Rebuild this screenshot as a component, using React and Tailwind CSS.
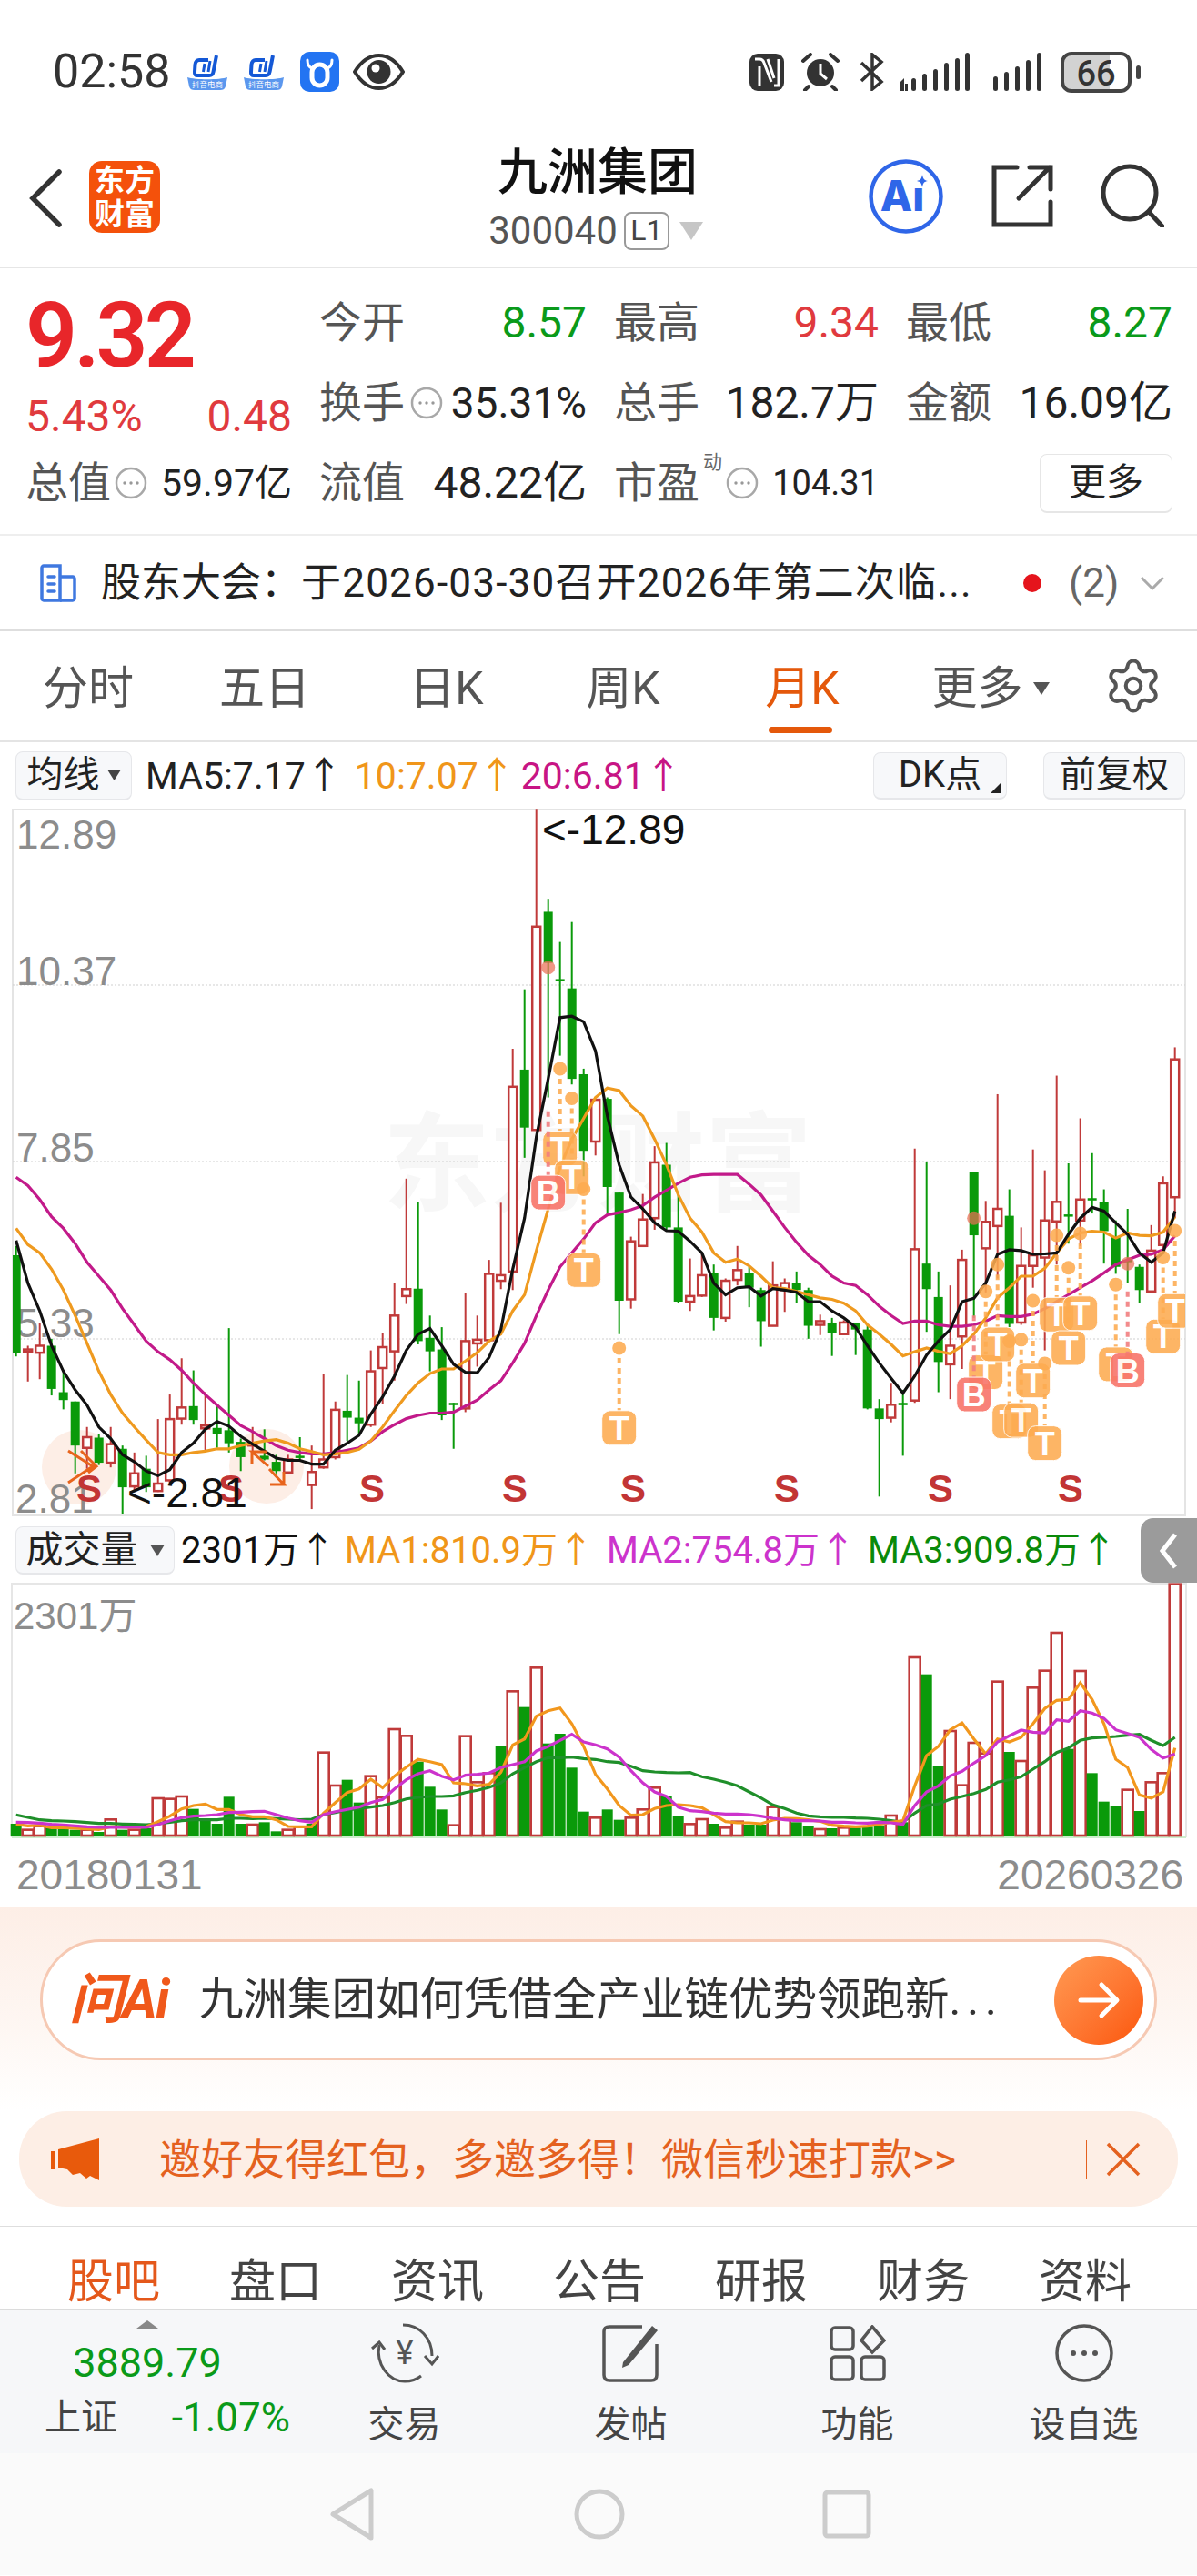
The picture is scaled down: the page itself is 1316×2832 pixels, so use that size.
import { Settings } from 'lucide-react';

const kx = (i) => 17.7 + 13 * i;
const ky = (z) => 880 + z / 1.96;
const pts = (ys) => ys.map((y, i) => `${kx(i).toFixed(1)},${y.toFixed(1)}`).join(' ');

// hi, body top, body bottom, lo, colour (read off the chart)
const K = [
  [960,980,1190,1198,'g'],[1175,1183,1188,1252,'r'],[1125,1175,1190,1247,'r'],[1160,1175,1268,1282,'g'],[1230,1275,1292,1312,'g'],
  [1295,1295,1390,1450,'g'],[1350,1372,1395,1440,'r'],[1365,1373,1427,1432,'g'],[1350,1387,1427,1437,'r'],[1390,1397,1480,1540,'g'],
  [1405,1450,1478,1490,'r'],[1412,1440,1480,1490,'g'],[1333,1472,1488,1490,'r'],[1280,1333,1465,1470,'r'],[1202,1308,1332,1345,'r'],
  [1228,1305,1335,1345,'g'],[1275,1347,1353,1400,'r'],[1302,1352,1365,1395,'g'],[1137,1357,1385,1405,'g'],[1375,1382,1415,1445,'g'],
  [1350,1385,1390,1410,'r'],[1355,1412,1420,1422,'g'],[1410,1425,1445,1450,'g'],[1410,1420,1448,1450,'r'],[1372,1412,1415,1420,'g'],
  [1390,1447,1475,1527,'r'],[1235,1420,1437,1440,'r'],[1295,1313,1415,1420,'r'],[1238,1315,1330,1380,'g'],[1250,1330,1342,1365,'g'],
  [1185,1230,1345,1350,'r'],[1148,1178,1223,1300,'r'],[1040,1110,1187,1250,'r'],[815,1053,1068,1085,'r'],[865,1052,1165,1172,'g'],
  [1110,1158,1187,1230,'g'],[1135,1183,1325,1335,'g'],[1298,1298,1300,1397,'g'],[1062,1165,1310,1318,'r'],[1110,1162,1170,1220,'r'],
  [990,1020,1163,1165,'r'],[867,1023,1035,1053,'r'],[535,617,1015,1055,'r'],[407,580,705,770,'g'],[18,272,710,712,'r'],
  [212,240,350,640,'g'],[305,385,389,550,'g'],[262,405,600,612,'g'],[578,590,755,810,'g'],[645,645,735,765,'r'],
  [640,643,833,895,'g'],[843,845,1078,1150,'g'],[940,950,1075,1095,'r'],[848,903,960,962,'r'],[745,780,900,925,'r'],
  [738,785,920,925,'g'],[850,920,1080,1082,'g'],[987,1068,1080,1100,'r'],[975,1023,1067,1070,'r'],[1000,1018,1115,1142,'g'],
  [1030,1035,1115,1123,'r'],[960,1012,1033,1045,'r'],[1005,1018,1050,1092,'g'],[1050,1055,1122,1177,'g'],[993,1045,1132,1133,'r'],
  [1030,1040,1055,1102,'r'],[1015,1040,1055,1082,'g'],[1050,1055,1132,1160,'g'],[1108,1122,1130,1152,'r'],[1115,1125,1148,1197,'g'],
  [1120,1125,1150,1152,'r'],[1125,1125,1140,1195,'g'],[1130,1140,1310,1312,'g'],[1290,1310,1333,1500,'g'],[1255,1302,1330,1340,'r'],
  [1270,1298,1303,1412,'g'],[750,967,1293,1298,'r'],[778,998,1053,1145,'g'],[1015,1070,1210,1275,'g'],[1045,1175,1215,1290,'r'],
  [968,990,1155,1225,'r'],[800,800,937,1115,'g'],[863,908,965,1060,'r'],[633,880,917,1030,'r'],[838,895,1128,1135,'g'],
  [920,1003,1125,1130,'r'],[752,980,1003,1050,'r'],[797,905,985,1185,'r'],[593,865,907,1000,'r'],[782,892,896,955,'g'],
  [685,860,905,960,'r'],[760,857,862,890,'g'],[838,865,928,998,'g'],[905,940,1005,1020,'g'],[880,990,995,1040,'g'],
  [1000,1005,1055,1083,'g'],[915,970,1058,1060,'r'],[810,825,958,965,'r'],[532,558,855,900,'r'],
];

const MA5 = [948,1040,1100,1175,1230,1270,1303,1350,1375,1410,1425,1445,1455,1442,1405,1385,1355,1338,1348,1370,1387,1402,1417,1422,1422,1430,1430,1400,1385,1368,1322,1285,1240,1185,1150,1138,1175,1215,1232,1233,1200,1140,1010,900,725,600,468,465,477,540,680,785,855,880,910,927,928,950,975,1040,1065,1050,1048,1068,1052,1055,1060,1080,1080,1100,1115,1135,1175,1212,1245,1277,1240,1195,1165,1140,1080,1073,1040,978,968,970,978,977,975,935,900,877,885,910,935,975,995,975,885].map(ky);
const MA10 = [922,957,975,1010,1055,1110,1170,1230,1280,1320,1350,1378,1405,1410,1410,1405,1402,1397,1397,1390,1385,1380,1377,1385,1397,1403,1410,1408,1405,1398,1380,1350,1315,1282,1255,1235,1225,1225,1208,1190,1165,1150,1100,1065,970,880,790,730,685,640,620,625,658,680,730,785,850,900,930,975,995,988,1003,1025,1050,1052,1058,1065,1072,1075,1083,1100,1130,1150,1172,1197,1188,1180,1187,1192,1175,1150,1115,1072,1050,1025,1025,1008,975,945,932,928,930,943,932,937,938,930,897].map(ky);
const MA20 = [812,830,860,897,922,955,995,1025,1055,1095,1130,1165,1188,1205,1228,1255,1280,1303,1325,1347,1360,1375,1390,1400,1405,1408,1408,1405,1400,1395,1380,1360,1345,1332,1325,1320,1320,1318,1305,1292,1270,1250,1212,1170,1110,1055,1005,975,945,910,893,888,882,873,855,840,825,812,807,806,806,806,827,850,885,920,952,980,1000,1025,1040,1045,1065,1090,1110,1127,1122,1122,1130,1133,1133,1130,1122,1110,1112,1112,1107,1095,1080,1065,1050,1035,1018,1000,990,980,978,968,938].map(ky);

// [candle index, dot, tag] in chart read-off units
const TAGS = [[46,578,750],[47,642,812],[48,838,1012],[51,1180,1352],[82,1058,1232],[83,1000,1172],[84,1165,1338],[85,1162,1335],[86,1078,1250],[87,1213,1385],[88,937,1108],[89,1007,1180],[90,933,1105],[93,1043,1215],[97,985,1155],[98,927,1100]];
const BTAGS = [[45,360,670,845],[81,900,1110,1280],[94,998,1058,1228]];

const SLABELS = [98, 254, 409, 566, 696, 865, 1034, 1177];

const volColors = 'grrgggrgrgrgrrrgggggrggrrgrrggrrrrgggrr' + 'rrgrgrggggrggrrrggrrgrrggrrggrg' + 'rgggrgrggrrrrrgrrrrgrgggrgrrr';
const V1 = [735,752,740,750,750,755,752,762,718,755,752,750,648,650,642,686,720,735,646,735,735,730,760,752,742,735,497,606,590,665,575,645,420,442,530,613,688,737,443].map((z) => 1760 + z / 3);
const V2 = [655,625,538,355,410,277,530,498,610,755,772,748,782,772,745,673,703,768,793,777,795,805,785,798,798,737,775,790,803,810,810].map((z) => 1740 + z / 3);
const V3 = [805,808,805,800,765,790,243,302,606,486,665,525,560,323,558,585,343,287,162,548,288,628,722,737,680,753,655,625,2].map((z) => 1740 + z / 3);
const VOL = [...V1, ...V2, ...V3];

const vline = (a, b, c) => [...a.map((z) => 1760 + z / 3), ...b.map((z) => 1740 + z / 3), ...c.map((z) => 1740 + z / 3)];
const VMA1 = vline(
  [737,742,740,748,748,750,752,754,745,746,748,745,728,710,686,675,670,688,688,705,712,712,722,744,745,745,700,665,632,620,588,616,578,548,523,530,540,600,603],
  [670,665,625,535,515,440,422,413,465,540,632,680,735,767,765,745,735,732,735,742,765,788,792,792,795,783,777,778,782,787,800],
  [803,805,803,797,790,785,670,570,540,485,462,515,565,515,525,510,465,415,388,385,330,385,465,582,610,700,710,690,545],
);
const VMA2 = vline(
  [730,731,733,737,739,742,745,747,747,747,747,747,738,725,715,710,708,705,698,697,695,694,705,716,725,730,705,695,688,680,665,655,620,590,570,560,578,590,575],
  [632,628,610,600,590,555,540,520,500,525,535,548,575,620,660,690,705,740,752,755,760,763,763,765,770,777,782,785,785,786,790],
  [790,792,793,790,792,797,735,690,670,637,622,595,570,525,505,486,493,495,452,457,422,430,447,485,497,510,550,578,565],
);
const VMA3 = vline(
  [706,714,722,725,726,728,731,734,734,736,737,738,735,730,725,722,722,722,717,717,718,717,718,720,722,720,705,698,690,685,680,675,665,653,648,645,645,643,632],
  [685,675,660,630,610,590,577,577,575,580,583,590,593,605,620,624,626,627,626,640,648,658,670,690,710,733,745,760,769,772,774],
  [774,776,777,780,785,790,760,735,730,714,705,695,682,658,650,640,615,590,560,545,520,512,510,507,503,500,520,537,510],
);

const RED = '#c03a3a';
const GREEN = '#0a9a0a';

const axisFont = "font-['Liberation_Sans','Noto_Sans_CJK_SC',sans-serif]";

function InfoDots({ className }) {
  return (
    <svg className={className} viewBox="0 0 36 36" fill="none">
      <circle cx="18" cy="18" r="16" stroke="#a8a8a8" strokeWidth="2.5" />
      <circle cx="11" cy="18" r="1.7" fill="#999" />
      <circle cx="18" cy="18" r="1.7" fill="#999" />
      <circle cx="25" cy="18" r="1.7" fill="#999" />
    </svg>
  );
}

function SmallBtn({ className, children }) {
  return (
    <div className={`shrink-0 flex items-center justify-center rounded-[8px] border border-[#e6e7ea] border-b-2 bg-[#f7f8fa] ${className}`}>
      {children}
    </div>
  );
}

function StatusBar() {
  return (
    <div className="h-[140px] pt-[56px] pl-[58px] pr-[61px] flex items-start justify-between">
      <div className="flex items-center h-[46px]">
        <span className="text-[52px] leading-[46px] text-[#333] w-[148px]">02:58</span>
        {[0, 1].map((n) => (
          <svg key={n} className="w-[44px] h-[40px] mr-[18px]" viewBox="0 0 44 40" fill="none">
            <path d="M13 7h10M13 7c-3 0-4 2-4.500 5L8 20c-.4 3 1 4 3 4h13c3 0 4-1 4.500-4L32 2" stroke="#1458d6" strokeWidth="4" />
            <path d="M19 11l-1.500 9M25 8l-2 12" stroke="#1458d6" strokeWidth="3" />
            <path d="M0 26c8 3 36 3 44 0l-2 10c-1 3-3 4-6 4H8c-3 0-5-1-6-4z" fill="#5b97ee" />
            <text x="22" y="37" textAnchor="middle" fontSize="8.500" fill="#fff">抖音电商</text>
          </svg>
        ))}
        <svg className="w-[43px] h-[44px]" viewBox="0 0 43 44" fill="none">
          <rect width="43" height="44" rx="10" fill="#2374f2" />
          <path d="M8 9c0 5 2 8 5 9M35 9c0 5-2 8-5 9" stroke="#fff" strokeWidth="3" strokeLinecap="round" />
          <rect x="13" y="14" width="17" height="23" rx="8.500" stroke="#fff" strokeWidth="5" />
        </svg>
        <svg className="w-[57px] h-[40px] ml-[15px]" viewBox="0 0 57 40" fill="none">
          <path d="M2 20C10 7 19 2 28.500 2S47 7 55 20C47 33 38 38 28.500 38S10 33 2 20z" stroke="#333" strokeWidth="4" />
          <circle cx="28.500" cy="20" r="13" fill="#333" />
          <circle cx="25" cy="16" r="4.500" fill="#fff" />
        </svg>
      </div>
      <div className="flex items-center h-[46px]">
        <svg className="w-[38px] h-[41px]" viewBox="0 0 38 41" fill="none">
          <rect width="38" height="41" rx="9" fill="#333" />
          <path d="M6 6h5c3 0 4 1 5 4l8 21M11 35V14M20 6l7 21M32 6v29h-5" stroke="#fff" strokeWidth="3" />
        </svg>
        <svg className="w-[44px] h-[42px] ml-[18px]" viewBox="0 0 44 42" fill="none">
          <circle cx="22" cy="22" r="15" fill="#333" />
          <path d="M22 12v11l7 6" stroke="#fff" strokeWidth="3" />
          <path d="M3 9l8-7M41 9l-8-7M9 37l-4 4M35 37l4 4" stroke="#333" strokeWidth="4" strokeLinecap="round" />
        </svg>
        <svg className="w-[27px] h-[42px] ml-[21px]" viewBox="0 0 27 42" fill="none">
          <path d="M2 11l22 21-10 8V2l10 8L2 31" stroke="#333" strokeWidth="3.500" />
        </svg>
        <svg className="w-[76px] h-[42px] ml-[18px]" viewBox="0 0 76 42" fill="#333">
          <path d="M0 32l4-4v14H0zM5 34h3v8H5z" />
          <rect x="12" y="28" width="5" height="14" rx="2.500" />
          <rect x="24" y="23" width="5" height="19" rx="2.500" />
          <rect x="36" y="18" width="5" height="24" rx="2.500" />
          <rect x="48" y="11" width="5" height="31" rx="2.500" />
          <rect x="71" y="0" width="5" height="42" rx="2.500" />
          <rect x="60" y="6" width="5" height="36" rx="2.500" />
        </svg>
        <svg className="w-[53px] h-[42px] ml-[26px]" viewBox="0 0 53 42" fill="#333">
          <rect x="0" y="26" width="5" height="16" rx="2.500" />
          <rect x="12" y="21" width="5" height="21" rx="2.500" />
          <rect x="24" y="15" width="5" height="27" rx="2.500" />
          <rect x="36" y="8" width="5" height="34" rx="2.500" />
          <rect x="48" y="0" width="5" height="42" rx="2.500" />
        </svg>
        <svg className="w-[89px] h-[45px] ml-[21px]" viewBox="0 0 89 45" fill="none">
          <rect x="4" y="4" width="50" height="37" fill="#d2d2d2" />
          <rect x="2" y="2" width="74" height="41" rx="10" stroke="#444" strokeWidth="4" />
          <rect x="83" y="15" width="5" height="15" rx="2.500" fill="#444" />
          <text x="39" y="37" textAnchor="middle" fontSize="38" fontWeight="500" fill="#333">66</text>
        </svg>
      </div>
    </div>
  );
}

function Header() {
  return (
    <div className="h-[155px] border-b-2 border-[#e6e6e6] grid grid-cols-[1fr_auto_1fr]">
      <div className="flex items-start pl-[32px] pt-[37px]">
        <svg className="w-[36px] h-[64px] mt-[9px]" viewBox="0 0 36 64" fill="none">
          <path d="M33 3L4 32l29 29" stroke="#333" strokeWidth="5.500" strokeLinecap="round" />
        </svg>
        <div className="ml-[30px] w-[78px] h-[79px] rounded-[14px] bg-[#f4510b] text-white text-[33px] leading-[37px] font-bold flex flex-col items-center justify-center">
          <span>东方</span>
          <span>财富</span>
        </div>
      </div>
      <div className="flex flex-col items-center pt-[16px]">
        <div className="text-[55px] leading-[66px] font-medium text-[#111] -ml-[2px]">九洲集团</div>
        <div className="flex items-center mt-[11px] h-[42px] -ml-[6px]">
          <span className="text-[42px] leading-[42px] text-[#555]">300040</span>
          <span className="ml-[7px] w-[50px] h-[42px] border-2 border-[#999] rounded-[8px] text-[32px] leading-[36px] text-[#444] text-center">L1</span>
          <svg className="ml-[11px] w-[26px] h-[20px]" viewBox="0 0 26 20"><path d="M0 0h26L13 20z" fill="#c6c6c6" /></svg>
        </div>
      </div>
      <div className="flex items-start justify-end pr-[36px] pt-[34px]">
        <svg className="w-[84px] h-[84px]" viewBox="0 0 84 84" fill="none">
          <circle cx="42" cy="42" r="38.500" stroke="#2f66e8" strokeWidth="4.500" />
          <text x="38" y="58" textAnchor="middle" fontSize="46" fontWeight="800" fill="#2f66e8" fontFamily="Inter, sans-serif">Aı</text>
          <path d="M60 18c1 5 2 6 6 7-4 1-5 2-6 7-1-5-2-6-6-7 4-1 5-2 6-7z" fill="#2f66e8" />
        </svg>
        <svg className="w-[68px] h-[70px] ml-[52px] mt-[6px]" viewBox="0 0 68 70" fill="none" stroke="#333" strokeWidth="5">
          <path d="M28 4H3v63h62V42" strokeLinecap="round" />
          <path d="M30 38L64 4M42 4h23v24" strokeLinecap="round" />
        </svg>
        <svg className="w-[70px] h-[70px] ml-[52px] mt-[6px]" viewBox="0 0 70 70" fill="none" stroke="#333" strokeWidth="5">
          <circle cx="32" cy="32" r="29" />
          <path d="M54 54l14 15" strokeLinecap="round" />
        </svg>
      </div>
    </div>
  );
}

const labelCls = 'text-[47px] leading-[56px] text-[#555]';
const valCls = 'text-[48px] leading-[56px]';

function Stats() {
  return (
    <div className="h-[294px] border-b-2 border-[#eeeeee] pt-[16px] pl-[28px] grid grid-cols-[293px_294px_291px_293px] grid-rows-[88px_88px_88px] gap-x-[30px]">
      <div className="row-span-2 flex flex-col">
        <div className="mt-[6px] text-[100px] leading-[104px] font-semibold text-[#e8262a] tracking-[-4px]">9.32</div>
        <div className="flex justify-between mt-[9px] text-[48px] leading-[56px] text-[#e03a3e]">
          <span>5.43%</span>
          <span>0.48</span>
        </div>
      </div>
      <div className="flex items-center justify-between">
        <span className={labelCls}>今开</span>
        <span className={`${valCls} text-[#0a9a1a]`}>8.57</span>
      </div>
      <div className="flex items-center justify-between">
        <span className={labelCls}>最高</span>
        <span className={`${valCls} text-[#e03a3e]`}>9.34</span>
      </div>
      <div className="flex items-center justify-between">
        <span className={labelCls}>最低</span>
        <span className={`${valCls} text-[#0a9a1a]`}>8.27</span>
      </div>
      <div className="flex items-center">
        <span className={labelCls}>换手</span>
        <InfoDots className="w-[36px] h-[36px] ml-[6px]" />
        <span className="ml-auto text-[46px] leading-[56px] text-[#222]">35.31%</span>
      </div>
      <div className="flex items-center justify-between">
        <span className={labelCls}>总手</span>
        <span className={`${valCls} text-[#222]`}>182.7万</span>
      </div>
      <div className="flex items-center justify-between">
        <span className={labelCls}>金额</span>
        <span className={`${valCls} text-[#222]`}>16.09亿</span>
      </div>
      <div className="flex items-center">
        <span className={labelCls}>总值</span>
        <InfoDots className="w-[36px] h-[36px] ml-[4px]" />
        <span className="ml-auto text-[41px] leading-[56px] text-[#222]">59.97亿</span>
      </div>
      <div className="flex items-center justify-between">
        <span className={labelCls}>流值</span>
        <span className={`${valCls} text-[#222]`}>48.22亿</span>
      </div>
      <div className="flex items-center">
        <span className={labelCls}>市盈</span>
        <span className="self-start mt-[8px] ml-[4px] text-[21px] leading-[26px] text-[#666]">动</span>
        <InfoDots className="w-[36px] h-[36px] ml-[4px]" />
        <span className="ml-auto text-[38px] leading-[56px] text-[#222]">104.31</span>
      </div>
      <div className="flex items-center justify-end">
        <div className="w-[146px] h-[65px] rounded-[8px] border border-[#e6e6e6] border-b-2 flex items-center justify-center text-[41px] text-[#222]">更多</div>
      </div>
    </div>
  );
}

function Notice() {
  return (
    <div className="h-[105px] border-b-2 border-[#dedede] pl-[44px] pr-[35px] flex items-center">
      <svg className="w-[40px] h-[42px] shrink-0" viewBox="0 0 40 42" fill="none" stroke="#3f78e0" strokeWidth="3.500">
        <path d="M2 4c0-1 1-2 2-2h18v38H4c-1 0-2-1-2-2z" />
        <path d="M22 14h14c1 0 2 1 2 2v22c0 1-1 2-2 2H22" />
        <path d="M9 14h7M9 22h7M9 30h7" strokeLinecap="round" />
      </svg>
      <span className="ml-[27px] w-[975px] text-[44px] leading-[56px] text-[#222] whitespace-nowrap">
        股东大会：<span className="tracking-[1.2px]">于2026-03-30召开2026年第二次临...</span>
      </span>
      <span className="ml-[47px] w-[20px] h-[20px] rounded-full bg-[#e5141c]" />
      <span className="ml-[30px] text-[44px] leading-[56px] text-[#666]">(2)</span>
      <svg className="ml-[23px] w-[28px] h-[16px]" viewBox="0 0 28 16" fill="none"><path d="M2 2l12 12L26 2" stroke="#aaa" strokeWidth="3" /></svg>
    </div>
  );
}

const TABS = ['分时', '五日', '日K', '周K', '月K'];

function Tabs() {
  return (
    <div className="h-[122px] pt-[5px] border-b-2 border-[#e4e4e4] grid grid-cols-[194px_194px_206px_182px_212px_202px_1fr] text-[50px] leading-[60px] text-[#555]">
      {TABS.map((t) => (
        <div key={t} className={`relative flex items-center justify-center ${t === '月K' ? 'text-[#e4580b]' : ''}`}>
          {t}
          {t === '月K' && <div className="absolute bottom-[8px] left-[69px] w-[70px] h-[7px] rounded-full bg-[#e4580b]" />}
        </div>
      ))}
      <div className="flex items-center justify-center">
        更多
        <svg className="ml-[11px] w-[18px] h-[14px]" viewBox="0 0 18 14"><path d="M0 0h18L9 14z" fill="#555" /></svg>
      </div>
      <div className="flex items-center justify-center pr-[14px] -mt-[6px]">
        <Settings size={66} strokeWidth={1.500} color="#555" />
      </div>
    </div>
  );
}

function MaLegend() {
  return (
    <div className="h-[73px] pl-[17px] pr-[13px] flex items-center text-[41px] leading-[50px] whitespace-nowrap">
      <SmallBtn className="w-[128px] h-[54px] text-[40px] text-[#222]">
        均线
        <svg className="ml-[8px] w-[15px] h-[12px]" viewBox="0 0 15 12"><path d="M0 0h15L7.500 12z" fill="#444" /></svg>
      </SmallBtn>
      <span className="ml-[15px] text-[#222]">MA5:7.17↑</span>
      <span className="ml-[13px] text-[#f0961a]">10:7.07↑</span>
      <span className="ml-[6px] text-[#c71585]">20:6.81↑</span>
      <SmallBtn className="relative ml-auto w-[147px] h-[52px] text-[40px] text-[#222]">
        DK点
        <svg className="absolute right-[5px] bottom-[5px] w-[12px] h-[12px]" viewBox="0 0 12 12"><path d="M12 0v12H0z" fill="#222" /></svg>
      </SmallBtn>
      <SmallBtn className="ml-[40px] w-[156px] h-[52px] text-[40px] text-[#222]">前复权</SmallBtn>
    </div>
  );
}

function KChart() {
  return (
    <svg className="block w-[1316px] h-[780px]" viewBox="0 889 1316 780">
      <defs>
        <clipPath id="kclip"><rect x="14" y="889" width="1289" height="776" /></clipPath>
      </defs>
      <rect x="14" y="890" width="1289" height="776" fill="#fff" stroke="#e4e4e4" strokeWidth="2" />
      <text x="421" y="1322" fontSize="118" fontWeight="700" fill="#f7f7f7">东方财富</text>
      {[1083, 1277, 1472].map((y) => (
        <line key={y} x1="14" x2="1303" y1={y} y2={y} stroke="#cfcfcf" strokeWidth="1" strokeDasharray="2 2" />
      ))}
      <circle cx="87" cy="1613" r="41" fill="#fdeee6" />
      <circle cx="293" cy="1612" r="41" fill="#fdeee6" />
      <g className={axisFont} fontSize="44" fill="#8c8c8c">
        <text x="18" y="933">12.89</text>
        <text x="18" y="1083">10.37</text>
        <text x="18" y="1277">7.85</text>
        <text x="18" y="1470">5.33</text>
        <text x="17" y="1663">2.81</text>
      </g>
      <g className={axisFont} fontSize="42" fontWeight="700" fill="#c23535">
        {SLABELS.map((x) => <text key={x} x={x} y="1651" textAnchor="middle">S</text>)}
      </g>
      <g clipPath="url(#kclip)">
        {K.map(([hi, top, bot, lo, c], i) => {
          const x = kx(i);
          const col = c === 'r' ? RED : GREEN;
          return (
            <g key={i}>
              <line x1={x} x2={x} y1={ky(hi)} y2={ky(lo)} stroke={col} strokeWidth="2" />
              {c === 'r' ? (
                <rect x={x - 4.500} y={ky(top)} width="9" height={Math.max(ky(bot) - ky(top), 2)} fill="#fff" stroke={col} strokeWidth="2.500" />
              ) : (
                <rect x={x - 5} y={ky(top)} width="10" height={Math.max(ky(bot) - ky(top), 2.500)} fill={col} />
              )}
            </g>
          );
        })}
        <polyline points={pts(MA20)} fill="none" stroke="#c21a8a" strokeWidth="3.200" />
        <polyline points={pts(MA10)} fill="none" stroke="#ef9a1f" strokeWidth="3.200" />
        <polyline points={pts(MA5)} fill="none" stroke="#111" strokeWidth="3.200" />
        {TAGS.map(([i, dot, tag]) => {
          const x = kx(i);
          return (
            <g key={i} opacity="0.88">
              <line x1={x} x2={x} y1={ky(dot)} y2={ky(tag) - 18} stroke="#fdab50" strokeWidth="4" strokeDasharray="6 5" />
              <circle cx={x} cy={ky(dot)} r="7.500" fill="#fdab50" />
              <rect x={x - 19} y={ky(tag) - 19} width="38" height="38" rx="9" fill="#fdab50" stroke="#fff" strokeWidth="1" />
              <text className={axisFont} x={x} y={ky(tag) + 13} textAnchor="middle" fontSize="36" fontWeight="700" fill="#fff">T</text>
            </g>
          );
        })}
        {BTAGS.map(([i, dot, dash, tag]) => {
          const x = kx(i);
          return (
            <g key={i} opacity="0.9">
              <line x1={x} x2={x} y1={ky(dash)} y2={ky(tag) - 18} stroke="#f27f80" strokeWidth="4" strokeDasharray="6 5" />
              <circle cx={x} cy={ky(dot)} r="7.500" fill="#ea6f55" opacity="0.8" />
              <rect x={x - 19} y={ky(tag) - 19} width="38" height="38" rx="9" fill="#f8756a" stroke="#fff" strokeWidth="1" />
              <text className={axisFont} x={x} y={ky(tag) + 13} textAnchor="middle" fontSize="36" fontWeight="700" fill="#fff">B</text>
            </g>
          );
        })}
      </g>
      <g fill="none" stroke="#e8641c" strokeWidth="3">
        <path d="M75 1595l27 17-27 18M89 1595l17 17-9 7" />
        <path d="M277 1610v-14h16l-16 0 18 16M312 1618v14h-15l15 0-16-17" />
      </g>
      <g className={axisFont} fontSize="46" fill="#111">
        <text x="596" y="928">{'<-12.89'}</text>
        <text x="140" y="1657">{'<-2.81'}</text>
      </g>
    </svg>
  );
}

function VolLegend() {
  return (
    <div className="h-[71px] pl-[17px] flex items-center text-[40px] leading-[50px] whitespace-nowrap">
      <SmallBtn className="w-[175px] h-[53px] text-[41px] text-[#222]">
        成交量
        <svg className="ml-[13px] w-[16px] h-[13px]" viewBox="0 0 16 13"><path d="M0 0h16L8 13z" fill="#555" /></svg>
      </SmallBtn>
      <span className="ml-[7px] text-[#111]">2301万↑</span>
      <span className="ml-[10px] text-[#f0961a]">MA1:810.9万↑</span>
      <span className="ml-[14px] text-[#cc33cc]">MA2:754.8万↑</span>
      <span className="ml-[13px] text-[#0a8a0a]">MA3:909.8万↑</span>
      <div className="ml-auto w-[62px] shrink-0 self-stretch rounded-l-[14px] bg-[#9b9b9b] flex items-center justify-center">
        <svg className="w-[22px] h-[42px]" viewBox="0 0 22 42" fill="none"><path d="M18 3L4 21l14 18" stroke="#fff" strokeWidth="5" /></svg>
      </div>
    </div>
  );
}

function VolChart() {
  const base = 2019;
  return (
    <svg className="block w-[1316px] h-[290px]" viewBox="0 1740 1316 290">
      <rect x="13" y="1741" width="1291" height="278" fill="#fff" stroke="#e6e6e6" strokeWidth="2" />
      <line x1="13" x2="1304" y1={base + 1} y2={base + 1} stroke="#cdeecd" strokeWidth="2" />
      <text className={axisFont} x="15" y="1791" fontSize="42" fill="#8c8c8c">2301万</text>
      {VOL.map((y, i) => {
        const x = kx(i);
        return volColors[i] === 'g' ? (
          <rect key={i} x={x - 6} y={y} width="12" height={base - y} fill={GREEN} />
        ) : (
          <rect key={i} x={x - 6} y={y + 1} width="12" height={base - y - 2} fill="#fff" stroke={RED} strokeWidth="2.600" />
        );
      })}
      <polyline points={pts(VMA3)} fill="none" stroke="#1f8f2a" strokeWidth="3.200" />
      <polyline points={pts(VMA1)} fill="none" stroke="#f2971d" strokeWidth="3.200" />
      <polyline points={pts(VMA2)} fill="none" stroke="#cc33cc" strokeWidth="3.200" />
    </svg>
  );
}

function AskAi() {
  return (
    <div className="h-[225px] bg-gradient-to-b from-[#fdeee6] via-[#fef7f3] via-60% to-white px-[44px] pt-[36px]">
      <div className="h-[133px] rounded-full border-[3px] border-[#f6c9b3] bg-white flex items-center pl-[29px] pr-[12px]">
        <span className="w-[114px] text-[60px] leading-[60px] font-bold italic text-[#f0581a] whitespace-nowrap tracking-[-2px]">问Ai</span>
        <span className="ml-[29px] text-[48.500px] leading-[60px] text-[#333] whitespace-nowrap">九洲集团如何凭借全产业链优势领跑新<span className="tracking-[7px]">...</span></span>
        <div className="ml-auto w-[98px] h-[98px] rounded-full bg-gradient-to-br from-[#ff9a52] to-[#fb5500] flex items-center justify-center">
          <svg className="w-[50px] h-[50px]" viewBox="0 0 50 50" fill="none" stroke="#fff" strokeWidth="5" strokeLinecap="round" strokeLinejoin="round">
            <path d="M5 25h38M28 8l17 17-17 17" />
          </svg>
        </div>
      </div>
    </div>
  );
}

function Banner() {
  return (
    <div className="mx-[21px] h-[105px] rounded-[52px] bg-[#fdeee5] flex items-center pl-[35px]">
      <svg className="w-[54px] h-[46px]" viewBox="0 0 54 46" fill="#e85a0c">
        <rect x="0" y="14" width="4" height="20" />
        <path d="M8 12L53 0v46L43 41l-4 3-7-6-8 2-6-6-10-2z" />
      </svg>
      <span className="ml-[65px] w-[1019px] text-[46px] leading-[56px] text-[#e4611f] whitespace-nowrap">邀好友得红包，多邀多得！微信秒速打款&gt;&gt;</span>
      <span className="w-[1px] h-[42px] bg-[#e4611f]" />
      <svg className="ml-[21px] w-[38px] h-[38px]" viewBox="0 0 38 38" fill="none" stroke="#e4611f" strokeWidth="3.500"><path d="M2 2l34 34M36 2L2 36" /></svg>
    </div>
  );
}

const SUBTABS = ['股吧', '盘口', '资讯', '公告', '研报', '财务', '资料'];

function SubTabs() {
  return (
    <div className="mt-[21px] h-[92px] border-t border-[#dedede] pt-[35px] pl-[36px] flex">
      {SUBTABS.map((t, i) => (
        <div key={t} className={`w-[178px] text-center text-[51px] leading-[52px] ${i === 0 ? 'text-[#e4581b]' : 'text-[#444]'}`}>{t}</div>
      ))}
    </div>
  );
}

function BottomItem({ label, children }) {
  return (
    <div className="flex flex-col items-center pt-[14px]">
      <div className="h-[66px] flex items-center justify-center">{children}</div>
      <div className="mt-[24px] text-[40px] leading-[44px] text-[#444]">{label}</div>
    </div>
  );
}

function BottomBar() {
  return (
    <div className="h-[158px] border-t border-[#dcdcdc] bg-[#f6f7f9] grid grid-cols-[320px_249px_249px_249px_249px]">
      <div className="relative flex flex-col items-center pt-[36px]">
        <svg className="absolute left-[150px] top-[11px] w-[24px] h-[9px]" viewBox="0 0 24 9"><path d="M12 0l12 9H0z" fill="#888" /></svg>
        <div className="ml-[4px] text-[45px] leading-[44px] text-[#0a9a1a]">3889.79</div>
        <div className="mt-[13px] w-[270px] self-start ml-[49px] flex justify-between items-center">
          <span className="text-[40px] leading-[50px] text-[#444]">上证</span>
          <span className="text-[44px] leading-[50px] text-[#0a9a1a]">-1.07%</span>
        </div>
      </div>
      <BottomItem label="交易">
        <svg className="w-[76px] h-[66px]" viewBox="0 0 76 66" fill="none" stroke="#555" strokeWidth="3">
          <path d="M10 24C6 45 20 64 38 64c8 0 13-2 18-6" />
          <path d="M36 2c18 0 32 14 32 34" />
          <path d="M2 28l8-7 6 8M60 36l8 9 7-9" />
          <text x="38" y="45" textAnchor="middle" fontSize="36" fill="#555" stroke="none">¥</text>
        </svg>
      </BottomItem>
      <BottomItem label="发帖">
        <svg className="w-[64px] h-[64px]" viewBox="0 0 64 64" fill="none" stroke="#555" strokeWidth="3.500">
          <path d="M44 3H8C4 3 2 5 2 8v48c0 4 2 6 6 6h46c4 0 6-2 6-6V22" />
          <path d="M23 42L55 2l6 5-32 38-7 3z" fill="#555" stroke="none" />
        </svg>
      </BottomItem>
      <BottomItem label="功能">
        <svg className="w-[62px] h-[62px]" viewBox="0 0 62 62" fill="none" stroke="#555" strokeWidth="3.500">
          <rect x="2" y="3" width="24" height="24" rx="4" />
          <rect x="2" y="35" width="24" height="25" rx="4" />
          <rect x="35" y="35" width="25" height="25" rx="4" />
          <path d="M47 2l13 15-13 13-12-13z" />
        </svg>
      </BottomItem>
      <BottomItem label="设自选">
        <svg className="w-[64px] h-[64px]" viewBox="0 0 64 64" fill="none">
          <circle cx="32" cy="32" r="30" stroke="#555" strokeWidth="3.500" />
          <circle cx="20" cy="32" r="3" fill="#555" />
          <circle cx="32" cy="32" r="3" fill="#555" />
          <circle cx="44" cy="32" r="3" fill="#555" />
        </svg>
      </BottomItem>
    </div>
  );
}

function NavBar() {
  return (
    <div className="h-[134px] bg-[#fafafa] flex items-center justify-center gap-[217px]">
      <svg className="w-[56px] h-[60px]" viewBox="0 0 56 60" fill="none" stroke="#cccccc" strokeWidth="5" strokeLinejoin="round">
        <path d="M50 4v52L8 30z" />
      </svg>
      <svg className="w-[56px] h-[58px]" viewBox="0 0 56 58" fill="none" stroke="#cccccc" strokeWidth="5">
        <circle cx="28" cy="29" r="25" />
      </svg>
      <svg className="w-[54px] h-[54px]" viewBox="0 0 54 54" fill="none" stroke="#cccccc" strokeWidth="5">
        <rect x="3" y="3" width="48" height="48" rx="3" />
      </svg>
    </div>
  );
}

export default function App() {
  return (
    <div className="w-[1316px] h-[2832px] bg-white overflow-hidden font-['Roboto','Noto_Sans_CJK_SC',sans-serif]">
      <StatusBar />
      <Header />
      <Stats />
      <Notice />
      <Tabs />
      <MaLegend />
      <KChart />
      <VolLegend />
      <VolChart />
      <div className={`h-[66px] pb-[5px] pl-[18px] pr-[15px] flex items-center justify-between text-[46px] leading-[50px] text-[#8c8c8c] ${axisFont}`}>
        <span>20180131</span>
        <span>20260326</span>
      </div>
      <AskAi />
      <Banner />
      <SubTabs />
      <BottomBar />
      <NavBar />
    </div>
  );
}
